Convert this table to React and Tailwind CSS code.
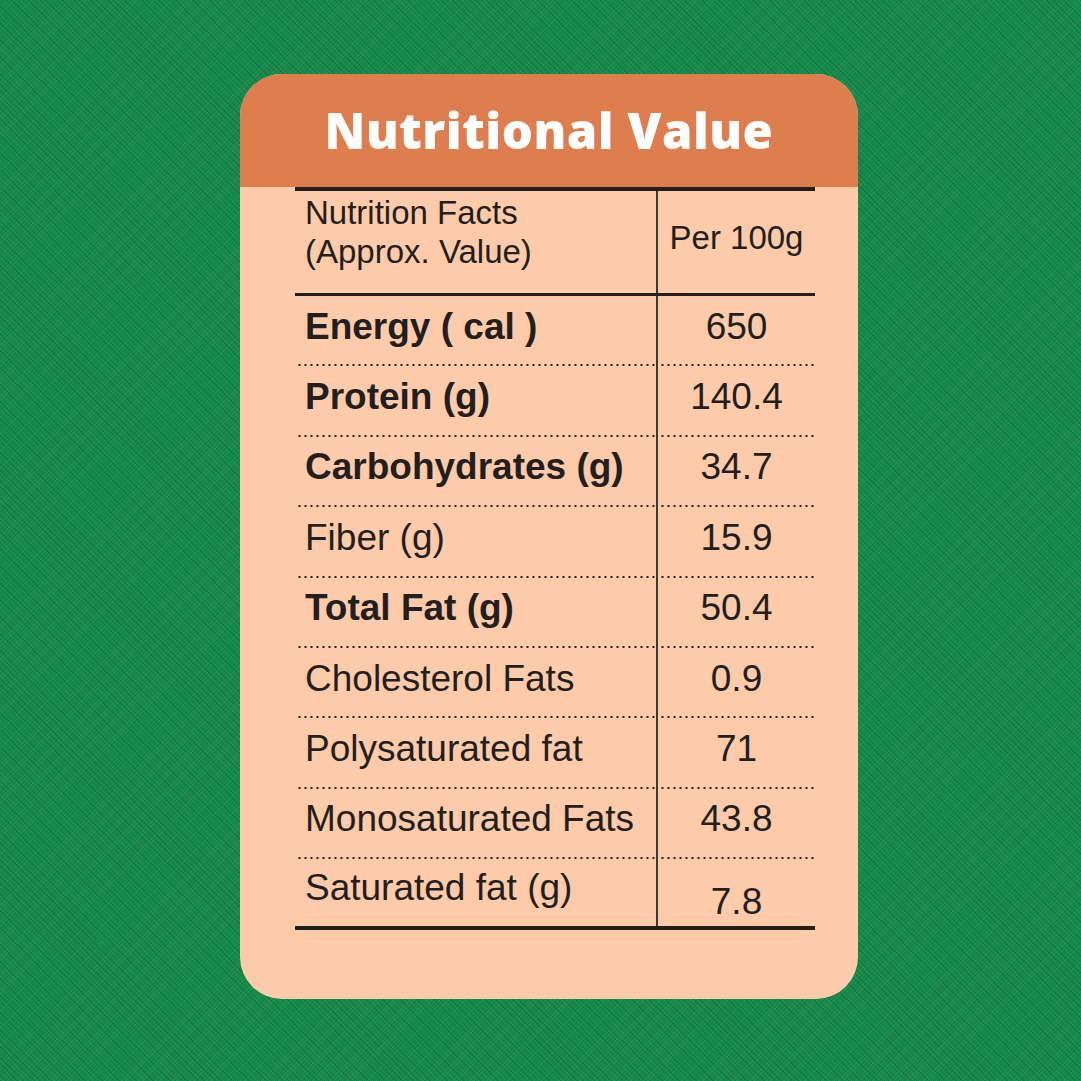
import React from "react";

const rows = [
  { label: "Energy ( cal )", value: "650", bold: true },
  { label: "Protein (g)", value: "140.4", bold: true },
  { label: "Carbohydrates (g)", value: "34.7", bold: true },
  { label: "Fiber (g)", value: "15.9" },
  { label: "Total Fat (g)", value: "50.4", bold: true },
  { label: "Cholesterol Fats", value: "0.9" },
  { label: "Polysaturated fat", value: "71" },
  { label: "Monosaturated Fats", value: "43.8" },
  { label: "Saturated fat (g)", value: "7.8", last: true },
];

const dotted =
  "bg-[linear-gradient(to_right,#231f20_2px,transparent_2px)] bg-[length:6px_2px] bg-repeat-x bg-bottom";

export default function App() {
  return (
    <div className="w-[1081px] h-[1081px] bg-[#138a4a] bg-[repeating-linear-gradient(45deg,rgba(0,0,0,0.13)_0_1px,transparent_1px_4px),repeating-linear-gradient(-45deg,rgba(255,255,255,0.07)_0_1px,transparent_1px_3px)] pt-[74px] pl-[240px]">
      <div className="w-[618px] h-[925px] rounded-[42px] overflow-hidden bg-[#fdcba9] flex flex-col">
        <div className="h-[113px] bg-[#de7e4f] flex items-center justify-center shrink-0">
          <h1 className="font-['Open_Sans',sans-serif] font-extrabold text-[49px] leading-none text-white tracking-[0.5px]">
            Nutritional Value
          </h1>
        </div>
        <div className="ml-[55px] w-[520px] border-t-4 border-[#231f20] font-['Liberation_Sans',Arial,sans-serif] text-[#231f20]">
          <div className="flex h-[105px] border-b-[3px] border-[#231f20]">
            <div className="w-[363px] border-r-2 border-[#3a3a3a] pl-[10px] pt-[2px] text-[33px] leading-[39px]">
              Nutrition Facts
              <br />
              (Approx. Value)
            </div>
            <div className="flex-1 flex items-center justify-center pb-[8px] text-[33px]">
              Per 100g
            </div>
          </div>
          {rows.map((r) => (
            <div
              key={r.label}
              className={`flex h-[70.4px] ${r.last ? "border-b-4 border-[#231f20]" : ""}`}
            >
              <div
                className={`w-[363px] border-r-2 border-[#3a3a3a] pl-[10px] pb-[10px] flex items-center text-[37px] leading-none whitespace-nowrap ${r.bold ? "font-bold" : ""} ${r.last ? "" : dotted}`}
              >
                {r.label}
              </div>
              <div
                className={`flex-1 flex items-center justify-center text-[37px] leading-none ${r.last ? "pt-[18px]" : "pb-[10px] " + dotted}`}
              >
                {r.value}
              </div>
            </div>
          ))}
        </div>
      </div>
    </div>
  );
}
